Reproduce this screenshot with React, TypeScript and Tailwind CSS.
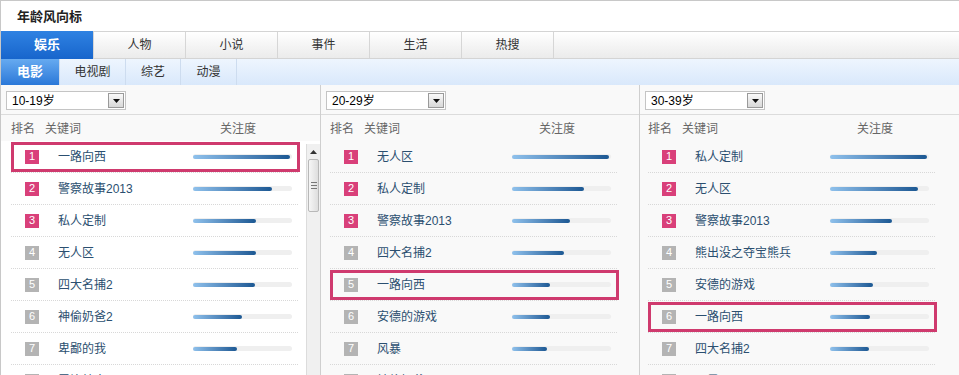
import React from "react";

type Item = { name: string; value: number };

const mainTabs = ["娱乐", "人物", "小说", "事件", "生活", "热搜"];
const subTabs = [
  { label: "电影", w: "w-[58px]" },
  { label: "电视剧", w: "w-[66px]" },
  { label: "综艺", w: "w-[55px]" },
  { label: "动漫", w: "w-[56px]" },
];

const columns: { age: string; pad: string; mark: number; items: Item[] }[] = [
  {
    age: "10-19岁",
    pad: "pl-[10px]",
    mark: 0,
    items: [
      { name: "一路向西", value: 97 },
      { name: "警察故事2013", value: 79 },
      { name: "私人定制", value: 63 },
      { name: "无人区", value: 63 },
      { name: "四大名捕2", value: 62 },
      { name: "神偷奶爸2", value: 49 },
      { name: "卑鄙的我", value: 44 },
      { name: "霍比特人2", value: 40 },
    ],
  },
  {
    age: "20-29岁",
    pad: "pl-[9px]",
    mark: 4,
    items: [
      { name: "无人区", value: 97 },
      { name: "私人定制", value: 72 },
      { name: "警察故事2013", value: 58 },
      { name: "四大名捕2", value: 52 },
      { name: "一路向西", value: 38 },
      { name: "安德的游戏", value: 38 },
      { name: "风暴", value: 35 },
      { name: "神偷奶爸2", value: 32 },
    ],
  },
  {
    age: "30-39岁",
    pad: "pl-[8px]",
    mark: 5,
    items: [
      { name: "私人定制", value: 97 },
      { name: "无人区", value: 88 },
      { name: "警察故事2013", value: 62 },
      { name: "熊出没之夺宝熊兵", value: 47 },
      { name: "安德的游戏", value: 43 },
      { name: "一路向西", value: 40 },
      { name: "四大名捕2", value: 39 },
      { name: "风暴", value: 36 },
    ],
  },
];

function Select({ label }: { label: string }) {
  return (
    <div className="flex h-[19px] w-[120px] items-center border border-[#c4c4c4] bg-white">
      <span className="flex-1 pl-[5px] text-[12px] leading-none text-black">{label}</span>
      <span className="mr-px flex h-[15px] w-[16px] items-center justify-center border border-[#9a9a9a] bg-gradient-to-b from-[#fafafa] to-[#d8d8d8]">
        <svg width="7" height="4" viewBox="0 0 7 4">
          <path d="M0 0h7L3.5 4z" fill="#111" />
        </svg>
      </span>
    </div>
  );
}

function Row({ rank, item, marked }: { rank: number; item: Item; marked: boolean }) {
  return (
    <div className="relative flex h-[32px] w-[287px] items-center border-b border-dotted border-[#d8d8d8]">
      <span
        className={
          "ml-[14px] flex h-[14px] w-[14px] items-center justify-center text-[11px] leading-none text-white " +
          (rank <= 3 ? "bg-[#d9407a]" : "bg-[#b4b4b4]")
        }
      >
        {rank}
      </span>
      <span className="ml-[19px] w-[135px] text-[12px] text-[#2b4f70]">{item.name}</span>
      <span className="relative h-[5px] w-[99px] rounded-full bg-[#efefef]">
        <span
          className="absolute left-0 top-[0.5px] h-[4px] rounded-full bg-gradient-to-r from-[#8fc1ec] to-[#1b5893]"
          style={{ width: `${item.value}px` }}
        />
      </span>
      {marked && (
        <span className="pointer-events-none absolute left-0 top-[1px] h-[30px] w-[289px] border-[3px] border-[#cf3a6e]" />
      )}
    </div>
  );
}

function Scrollbar() {
  return (
    <div className="mt-[3px] flex w-[14px] flex-col self-stretch border-l border-[#dcdcdc] bg-[#f0f0f0]">
      <div className="flex h-[15px] items-center justify-center">
        <svg width="7" height="4" viewBox="0 0 7 4">
          <path d="M0 4h7L3.5 0z" fill="#333" />
        </svg>
      </div>
      <div className="mx-px flex h-[53px] flex-col items-center justify-center gap-[2px] rounded-[2px] border border-[#b8b8b8] bg-gradient-to-r from-[#f6f6f6] to-[#dedede]">
        <span className="h-px w-[6px] bg-[#777]" />
        <span className="h-px w-[6px] bg-[#777]" />
        <span className="h-px w-[6px] bg-[#777]" />
      </div>
    </div>
  );
}

export default function App() {
  return (
    <div className="h-[375px] w-[959px] overflow-hidden border-l border-t border-[#c8c8c8] bg-white font-['Liberation_Sans','Noto_Sans_CJK_SC',sans-serif]">
      <div className="flex h-[30px] items-center pl-[16px] pt-[2px] text-[13px] font-bold text-[#222]">年龄风向标</div>

      <div className="flex h-[28px] border-y border-[#d4d4d4] bg-gradient-to-b from-white to-[#ebebeb]">
        {mainTabs.map((t, i) =>
          i === 0 ? (
            <div
              key={t}
              className="-my-px flex w-[92px] items-center justify-center bg-gradient-to-b from-[#2f82e2] to-[#1765cc] text-[13px] font-bold text-white"
            >
              {t}
            </div>
          ) : (
            <div key={t} className="flex w-[92px] items-center justify-center border-l border-[#d6d6d6] text-[12px] text-[#333]">
              {t}
            </div>
          )
        )}
        <div className="flex-1 border-l border-[#d6d6d6]" />
      </div>

      <div className="flex h-[26px] bg-gradient-to-b from-[#eef5fe] to-[#d9e8fb]">
        {subTabs.map((t, i) =>
          i === 0 ? (
            <div
              key={t.label}
              className={t.w + " flex items-center justify-center bg-gradient-to-b from-[#66aaf0] to-[#2a78d8] text-[13px] font-bold text-white"}
            >
              {t.label}
            </div>
          ) : (
            <div key={t.label} className={t.w + " flex items-center justify-center border-l border-[#cddcef] text-[12px] text-[#333]"}>
              {t.label}
            </div>
          )
        )}
        <div className="border-l border-[#cddcef]" />
      </div>

      <div className="flex h-[290px] bg-[#f9f9f9]">
        {columns.map((col, ci) => (
          <div
            key={col.age}
            className={
              "flex flex-col " +
              (ci === 0 ? "w-[320px] border-r border-[#cfcfcf]" : ci === 1 ? "w-[319px] border-r border-[#cfcfcf]" : "flex-1")
            }
          >
            <div className="flex h-[30px] shrink-0 border-b border-[#dcdcdc] pl-[5px] pt-[6px]">
              <Select label={col.age} />
            </div>
            <div className={"flex h-[26px] shrink-0 items-center pt-px text-[12px] text-[#666] " + col.pad}>
              <span className="w-[34px]">排名</span>
              <span className="w-[175px]">关键词</span>
              <span>关注度</span>
            </div>
            <div className={"flex flex-1 " + (ci === 0 ? "justify-between bg-white pl-[10px]" : col.pad)}>
              <div className="flex flex-col">
                {col.items.map((it, i) => (
                  <Row key={it.name} rank={i + 1} item={it} marked={i === col.mark} />
                ))}
              </div>
              {ci === 0 && <Scrollbar />}
            </div>
          </div>
        ))}
      </div>
    </div>
  );
}
